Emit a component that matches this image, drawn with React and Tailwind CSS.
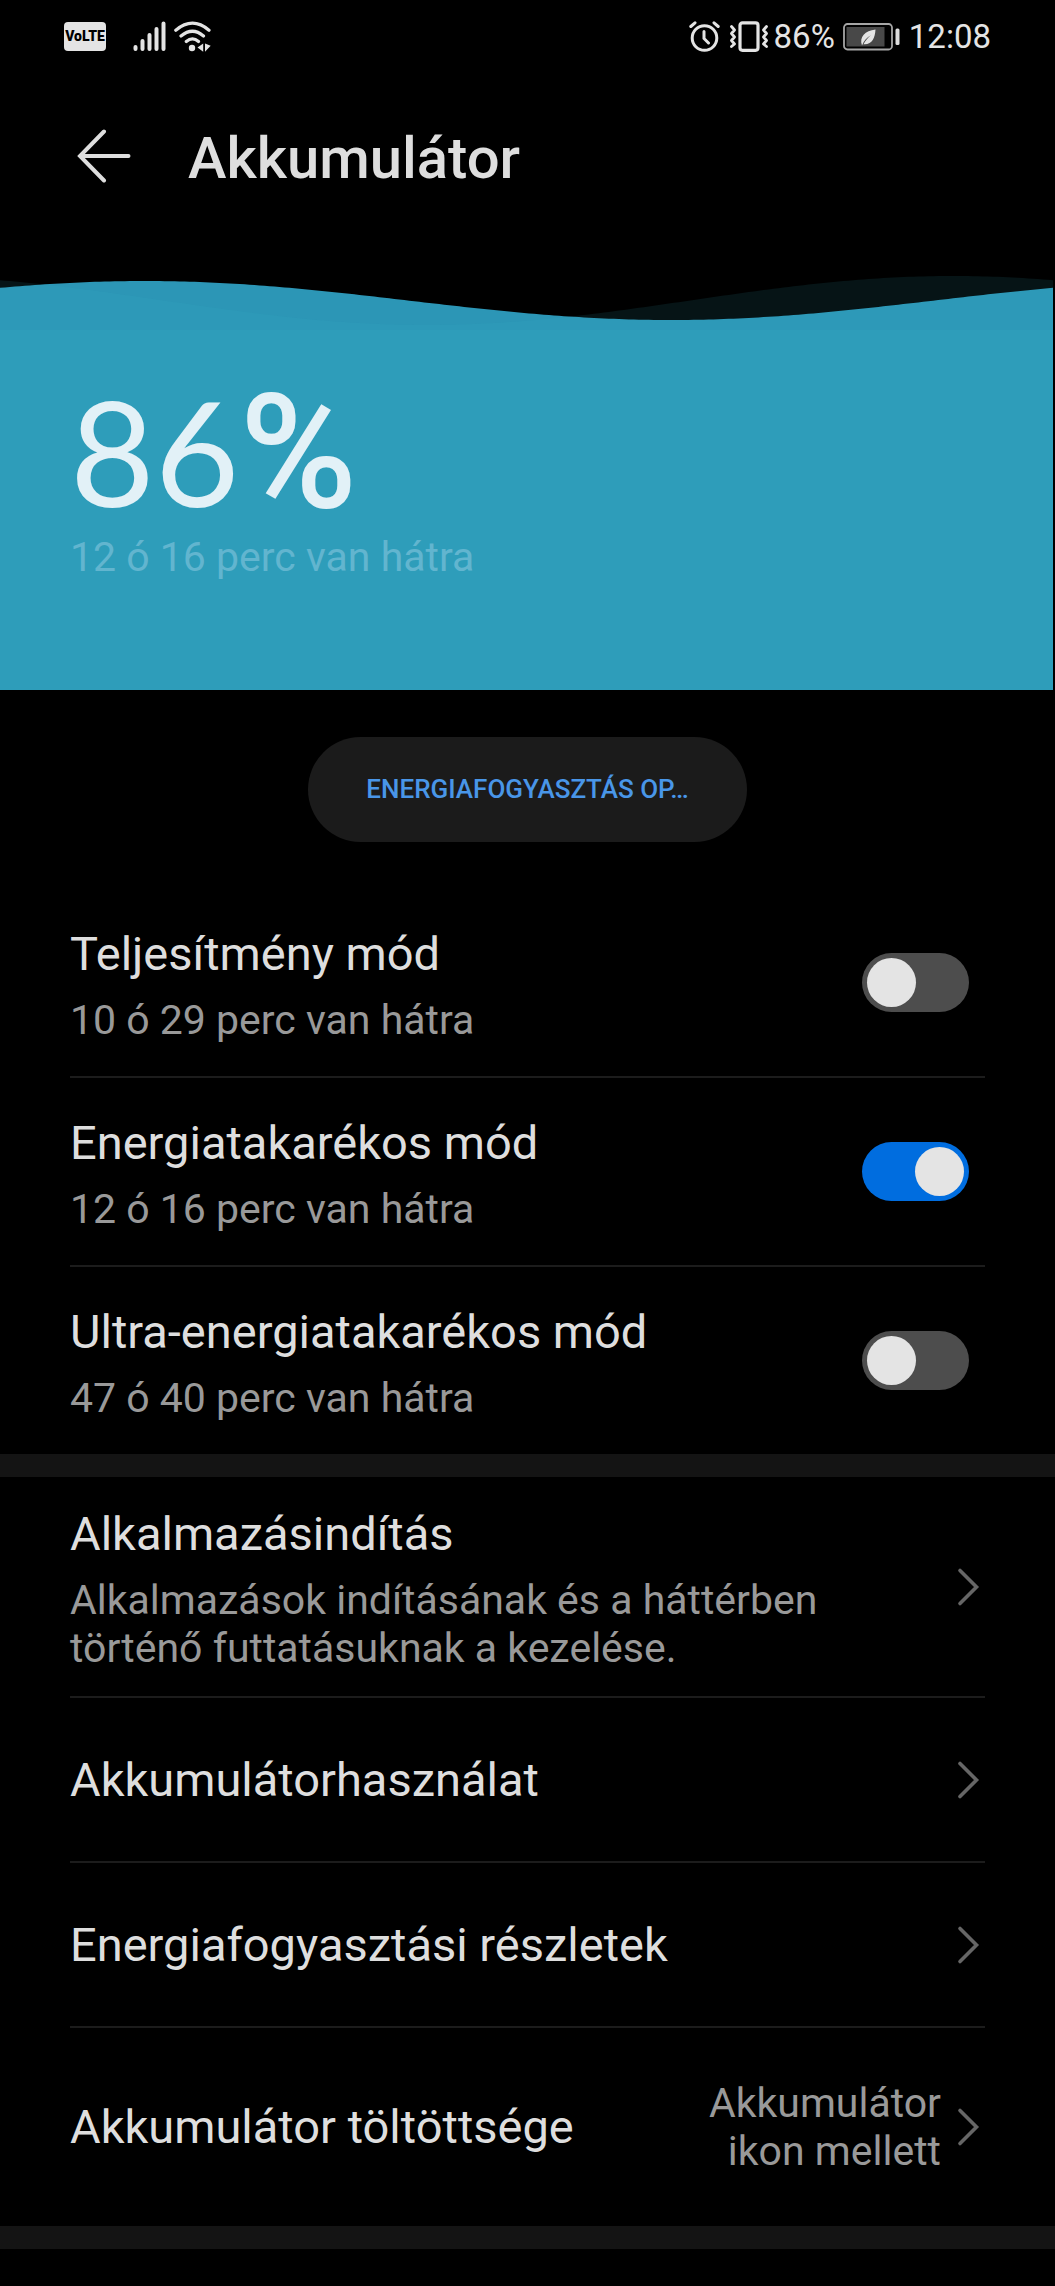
import { useState } from 'react'

const modes = [
  { id: 'performance', title: 'Teljesítmény mód', remaining: '10 ó 29 perc van hátra' },
  { id: 'saver', title: 'Energiatakarékos mód', remaining: '12 ó 16 perc van hátra' },
  { id: 'ultra', title: 'Ultra-energiatakarékos mód', remaining: '47 ó 40 perc van hátra' }
]

// One full sine period across the given width, closed along the bottom
const wavePath = (crestX, crestY, troughY, width = 1055, bottom = 60) => {
  const mid = (crestY + troughY) / 2
  const amp = (troughY - crestY) / 2
  const points = []
  for (let x = 0; x <= width; x += 5) {
    const y = mid - amp * Math.cos(((x - crestX) / width) * Math.PI * 2)
    points.push(`${x} ${y.toFixed(2)}`)
  }
  return `M${points.join('L')}V${bottom}H0Z`
}

const StatusBar = () => (
  <div className="flex h-[73px] items-center justify-between pr-16 pl-16 text-[#e4e4e4]">
    <div className="flex items-center">
      <span className="flex h-[29px] w-[42px] items-center justify-center rounded-[4px] bg-[#e4e4e4] text-[14px] font-black text-black">
        VoLTE
      </span>
      <svg className="ml-[27px] h-[31px] w-[33px]" viewBox="0 0 33 31" fill="none" stroke="currentColor" strokeWidth="4" strokeLinecap="round">
        <path d="M2.5 26v2M9.5 20v8M16.5 14v14M23.5 8v20M30.5 2.500v25.500" />
      </svg>
      <svg className="ml-2 h-[31px] w-[37px]" viewBox="0 0 37 31" fill="none" stroke="currentColor" strokeWidth="3.2" strokeLinecap="round">
        <path d="M1.800 9.200Q18.500-4.800 35 9.200M7 15Q18.500 5.500 29.500 15M12.300 20.500Q18.500 15.300 24.500 20.500" />
        <circle cx="18" cy="27" r="3.200" fill="currentColor" stroke="none" />
        <path d="M29.200 22.500v8.200l-5.700-4.100zM31 22.500l5.700 2.200-5.700 6z" fill="currentColor" stroke="none" />
      </svg>
    </div>
    <div className="flex items-center">
      <svg className="h-[31px] w-[31px]" viewBox="0 0 31 31" fill="none" stroke="currentColor" strokeWidth="3" strokeLinecap="round">
        <circle cx="15.500" cy="17" r="12.300" />
        <path d="M15 10.500v7l4.500 4.500M1.800 5.500l4.200-3.700M29.200 5.500L25 1.800" />
      </svg>
      <svg className="ml-[9px] h-[31px] w-10" viewBox="0 0 40 31" fill="none" stroke="currentColor" strokeLinecap="round" strokeLinejoin="round">
        <rect x="11" y="1.800" width="18" height="27.500" rx="2.500" strokeWidth="3.200" />
        <path d="M2.500 5.500l3 3.500-3 3.500 3 3.500-3 3.500 3 3.500-3 2.500M37.500 5.500l-3 3.500 3 3.500-3 3.500 3 3.500-3 3.500 3 2.500" strokeWidth="2.800" />
      </svg>
      <span className="ml-[5px] text-[33px] leading-10">86%</span>
      <svg className="ml-2 h-[28px] w-[58px]" viewBox="0 0 58 28" fill="none">
        <rect x="1" y="1" width="48" height="25.500" rx="3.500" stroke="#a6a6a6" strokeWidth="1.800" />
        <rect x="3.500" y="4" width="38" height="19.500" fill="#484848" />
        <path d="M19 22.500C16 14 22 7.500 32.500 6.500C32 15 29 22 20.500 21.200C22.500 17.500 25 14.500 28 12.200C24 14.200 21 17.200 19 22.500Z" fill="#e4e4e4" />
        <rect x="52.500" y="5.500" width="4" height="16.500" rx="1.500" fill="#dcdcdc" />
      </svg>
      <span className="ml-2 text-[33px] leading-10">12:08</span>
    </div>
  </div>
)

const Chevron = () => (
  <svg className="mr-1 h-10 w-6 shrink-0" viewBox="0 0 24 40" fill="none" stroke="#666666" strokeWidth="3.600" strokeLinecap="round">
    <path d="M3 3.500L19.500 20L3 36.500" />
  </svg>
)

const ModeRow = ({ mode, checked, onChange }) => (
  <label
    htmlFor={mode.id}
    className="flex h-[189px] cursor-pointer items-center justify-between border-b-2 border-[#1c1c1c] pr-4 last:h-[187px] last:border-b-0"
  >
    <span className="flex flex-col gap-2.5">
      <span className="text-[47px] leading-16 text-[#dedede]">{mode.title}</span>
      <span className="text-[41px] leading-12 text-[#999999]">{mode.remaining}</span>
    </span>
    <input
      id={mode.id}
      type="checkbox"
      role="switch"
      checked={checked}
      onChange={onChange}
      className="h-[59px] w-[107px] shrink-0 cursor-pointer appearance-none rounded-full bg-[#4d4d4d] p-[5px] before:block before:size-[49px] before:rounded-full before:bg-[#e4e4e4] before:transition-transform checked:bg-[#006ddf] checked:before:translate-x-12"
    />
  </label>
)

const LinkRow = ({ title, description, value, className }) => (
  <a href="#" className={`flex items-center border-b-2 border-[#1c1c1c] last:border-b-0 ${className}`}>
    <span className="flex flex-1 flex-col gap-2.5">
      <span className="text-[47px] leading-16 text-[#dedede]">{title}</span>
      {description && <span className="max-w-[780px] text-[41px] leading-12 text-[#999999]">{description}</span>}
    </span>
    {value && <span className="mr-4 w-[240px] text-right text-[41px] leading-12 text-[#999999]">{value}</span>}
    <Chevron />
  </a>
)

const App = () => {
  const [active, setActive] = useState('saver')

  return (
    <div className="min-h-screen bg-black font-['Roboto',sans-serif]">
      <StatusBar />

      <header className="flex h-[165px] items-center px-[77px]">
        <button type="button" aria-label="Vissza">
          <svg className="h-[54px] w-[54px]" viewBox="0 0 54 54" fill="none" stroke="#dedede" strokeWidth="4" strokeLinecap="round">
            <path d="M27 2.500L3 27L27 51.500M4 27H51.500" />
          </svg>
        </button>
        <h1 className="ml-[57px] pt-1 text-[58px] leading-[72px] font-medium text-[#dedede]">Akkumulátor</h1>
      </header>

      <section className="mt-[33px] pr-0.5">
        <svg className="block h-[60px] w-full" viewBox="0 0 1055 60" preserveAspectRatio="none">
          <path d={wavePath(145, 10, 49)} fill="#2c96b6" />
          <path d={wavePath(955, 5, 54)} fill="#3ab8cc" fillOpacity="0.11" />
          <path d="M0 59H1055V60H0Z" fill="#2e9dba" />
        </svg>
        <div className="h-[359px] bg-[#2e9dba] px-[70px] pt-[44px]">
          <p className="flex items-baseline leading-[152px] text-[#e2f1f7]">
            <span className="font-['Lato'] text-[146px]">86</span>
            <span className="text-[160px] font-medium">%</span>
          </p>
          <p className="mt-1 text-[41px] leading-12 text-[#62b5cf]">12 ó 16 perc van hátra</p>
        </div>
      </section>

      <div className="flex justify-center py-[47px]">
        <button
          type="button"
          className="h-[105px] w-[439px] rounded-full bg-[#1b1b1b] text-[26px] font-medium whitespace-nowrap text-[#4996e8]"
        >
          ENERGIAFOGYASZTÁS OP…
        </button>
      </div>

      <section className="px-[70px]">
        {modes.map(mode => (
          <ModeRow
            key={mode.id}
            mode={mode}
            checked={active === mode.id}
            onChange={() => setActive(active === mode.id ? '' : mode.id)}
          />
        ))}
      </section>

      <div className="h-[23px] bg-[#141414]" />

      <nav className="px-[70px]">
        <LinkRow
          title="Alkalmazásindítás"
          description="Alkalmazások indításának és a háttérben történő futtatásuknak a kezelése."
          className="h-[221px]"
        />
        <LinkRow title="Akkumulátorhasználat" className="h-[165px]" />
        <LinkRow title="Energiafogyasztási részletek" className="h-[165px]" />
        <LinkRow title="Akkumulátor töltöttsége" value="Akkumulátor ikon mellett" className="h-[198px]" />
      </nav>

      <div className="h-[23px] bg-[#141414]" />
    </div>
  )
}

export default App
